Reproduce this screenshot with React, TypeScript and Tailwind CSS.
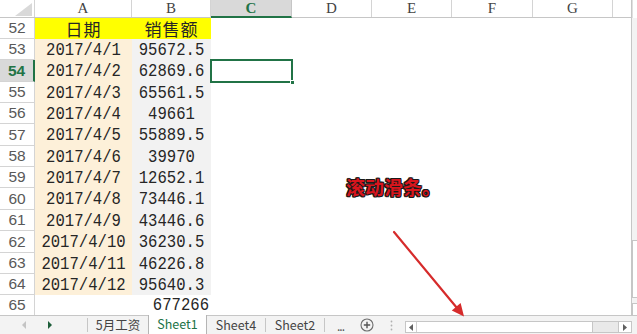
import React from "react";

type Row = { n: number; h: string; a: string; b: string; head?: boolean; sel?: boolean };

const rows: Row[] = [
  { n: 52, h: "h-[21px]", a: "日期", b: "销售额", head: true },
  { n: 53, h: "h-[21px]", a: "2017/4/1", b: "95672.5" },
  { n: 54, h: "h-[22px]", a: "2017/4/2", b: "62869.6", sel: true },
  { n: 55, h: "h-[21px]", a: "2017/4/3", b: "65561.5" },
  { n: 56, h: "h-[21px]", a: "2017/4/4", b: "49661" },
  { n: 57, h: "h-[22px]", a: "2017/4/5", b: "55889.5" },
  { n: 58, h: "h-[21px]", a: "2017/4/6", b: "39970" },
  { n: 59, h: "h-[21px]", a: "2017/4/7", b: "12652.1" },
  { n: 60, h: "h-[22px]", a: "2017/4/8", b: "73446.1" },
  { n: 61, h: "h-[21px]", a: "2017/4/9", b: "43446.6" },
  { n: 62, h: "h-[22px]", a: "2017/4/10", b: "36230.5" },
  { n: 63, h: "h-[21px]", a: "2017/4/11", b: "46226.8" },
  { n: 64, h: "h-[21px]", a: "2017/4/12", b: "95640.3" },
];

const cols = [
  { l: "A", w: "w-[97px]" },
  { l: "B", w: "w-[79px]" },
  { l: "C", w: "w-[81px]", active: true },
  { l: "D", w: "w-[80px]" },
  { l: "E", w: "w-[80px]" },
  { l: "F", w: "w-[81px]" },
  { l: "G", w: "w-[80px]" },
];

const mono = "font-['Liberation_Mono',monospace] text-[15.6px] text-[#262626]";
const rowHeadBase =
  "w-[35px] shrink-0 flex items-center justify-center border-r border-b border-[#d4d4d4] font-['Liberation_Sans',sans-serif] text-[15.5px]";

function Num({ children }: { children: React.ReactNode }) {
  return <span className="inline-block scale-y-[1.2] translate-y-[1px]">{children}</span>;
}

export default function App() {
  return (
    <div className="relative w-[637px] h-[334px] overflow-hidden bg-white select-none">
      <div className="flex h-[315px]">
        {/* grid */}
        <div className="w-[632px] h-[315px] border-r border-[#c6c6c6] flex flex-col">
          {/* column header */}
          <div className="flex h-[18px] border-b border-[#c6c6c6] font-['Liberation_Serif',serif] text-[15px] text-[#444]">
            <div className="w-[35px] shrink-0 border-r border-[#d4d4d4] flex items-end justify-end pr-[2px] pb-[1px]">
              <svg width="17" height="13" viewBox="0 0 17 13">
                <polygon points="17,0 17,13 0,13" fill="#d9d9d9" />
              </svg>
            </div>
            {cols.map((c) =>
              c.active ? (
                <div
                  key={c.l}
                  className={`${c.w} shrink-0 flex items-center justify-center bg-[#d9d9d9] text-[#217346] font-bold border-b-2 border-[#217346] border-r border-r-[#c6c6c6] -mb-px`}
                >
                  {c.l}
                </div>
              ) : (
                <div key={c.l} className={`${c.w} shrink-0 flex items-center justify-center border-r border-[#d4d4d4]`}>
                  {c.l}
                </div>
              )
            )}
            <div className="flex-1" />
          </div>

          {/* data rows */}
          {rows.map((r) => (
            <div key={r.n} className={`flex ${r.h}`}>
              {r.sel ? (
                <div className={`${rowHeadBase} bg-[#d9d9d9] text-[#217346] font-bold border-r-2 border-r-[#217346]`}>
                  {r.n}
                </div>
              ) : (
                <div className={`${rowHeadBase} text-[#595959]`}>{r.n}</div>
              )}
              {r.head ? (
                <>
                  <div className="w-[97px] shrink-0 bg-[#ffff00] flex items-center justify-center font-['Noto_Sans_CJK_SC',sans-serif] text-[17px] tracking-[1px] text-[#262626]">
                    {r.a}
                  </div>
                  <div className="w-[79px] shrink-0 bg-[#ffff00] flex items-center justify-center font-['Noto_Sans_CJK_SC',sans-serif] text-[17px] tracking-[1px] text-[#262626]">
                    {r.b}
                  </div>
                </>
              ) : (
                <>
                  <div className={`w-[97px] shrink-0 bg-[#fdf0d9] flex items-center justify-center ${mono}`}>
                    <Num>{r.a}</Num>
                  </div>
                  <div className={`w-[79px] shrink-0 bg-[#f2f2f2] flex items-center justify-center ${mono}`}>
                    <Num>{r.b}</Num>
                  </div>
                </>
              )}
              <div className="relative w-[81px] shrink-0">
                {r.sel && (
                  <div className="absolute -left-px -top-px -right-px -bottom-px border-2 border-[#217346]">
                    <div className="absolute -right-[4px] -bottom-[4px] w-[5px] h-[5px] bg-[#217346] border border-white" />
                  </div>
                )}
              </div>
              <div className="flex-1" />
            </div>
          ))}

          {/* row 65 */}
          <div className="flex h-[20px]">
            <div className={`${rowHeadBase} border-b-0 text-[#595959]`}>65</div>
            <div className="w-[97px] shrink-0" />
            <div className={`w-[79px] shrink-0 flex items-center justify-end pr-[2px] ${mono}`}>
              <Num>677266</Num>
            </div>
            <div className="flex-1" />
          </div>
        </div>

        {/* vertical scrollbar sliver */}
        <div className="w-[5px] h-[315px] flex flex-col bg-[#f3f3f3]">
          <div className="h-[18px] bg-white border-l border-[#e0e0e0]" />
          <div className="h-[222px]" />
          <div className="h-[58px] bg-white border-l border-t border-b border-[#c6c6c6]" />
          <div className="h-[5px]" />
          <div className="h-[12px] bg-white border-l border-t border-[#c6c6c6]" />
        </div>
      </div>

      {/* sheet tab bar */}
      <div className="flex h-[19px] items-stretch bg-[#f3f3f3] border-t border-[#c6c6c6] font-['Noto_Sans_CJK_SC',sans-serif] text-[12.5px] text-[#444]">
        <div className="w-[87px] shrink-0 relative">
          <svg className="absolute left-[22px] top-[5px]" width="5" height="8" viewBox="0 0 5 8">
            <polygon points="4,0 4,8 0,4" fill="#c4c4c4" />
          </svg>
          <svg className="absolute left-[48px] top-[5px]" width="5" height="8" viewBox="0 0 5 8">
            <polygon points="0,0 0,8 4,4" fill="#1e5e3a" />
          </svg>
        </div>
        <div className="w-[61px] shrink-0 flex items-center justify-center border-l border-[#c6c6c6] my-[2px] leading-none">
          5月工资
        </div>
        <div className="w-[59px] shrink-0 flex items-center justify-center bg-white text-[#217346] border-l border-r border-[#b5b5b5] -mt-px leading-none">
          Sheet1
        </div>
        <div className="w-[58px] shrink-0 flex items-center justify-center my-[2px] leading-none">Sheet4</div>
        <div className="w-[60px] shrink-0 flex items-center justify-center border-l border-r border-[#c6c6c6] my-[2px] leading-none">
          Sheet2
        </div>
        <div className="w-[80px] shrink-0 relative">
          <span className="absolute left-[12px] top-[1px] text-[12px] tracking-[-1px] text-[#555]">...</span>
          <svg className="absolute left-[35px] top-[2px]" width="14" height="14" viewBox="0 0 14 14">
            <circle cx="7" cy="7" r="6" fill="none" stroke="#6d6d6d" strokeWidth="1.1" />
            <path d="M7 3.8v6.4M3.8 7h6.4" stroke="#555" strokeWidth="1.4" />
          </svg>
          <svg className="absolute left-[65px] top-[4px]" width="3" height="11" viewBox="0 0 3 11">
            <circle cx="1.5" cy="1.5" r="0.9" fill="#b0b0b0" />
            <circle cx="1.5" cy="5.5" r="0.9" fill="#b0b0b0" />
            <circle cx="1.5" cy="9.5" r="0.9" fill="#b0b0b0" />
          </svg>
        </div>
        {/* horizontal scrollbar */}
        <div className="w-[227px] shrink-0 flex h-[12px] mt-[5px] border border-[#c6c6c6] bg-[#e9e9e9]">
          <div className="w-[11px] shrink-0 bg-white flex items-center justify-center border-r border-[#d0d0d0]">
            <svg width="4" height="7" viewBox="0 0 4 7">
              <polygon points="4,0 4,7 0,3.5" fill="#606060" />
            </svg>
          </div>
          <div className="w-[176px] shrink-0 bg-white border-r border-[#c6c6c6]" />
          <div className="flex-1" />
          <div className="w-[13px] shrink-0 bg-white flex items-center justify-center border-l border-[#c6c6c6]">
            <svg width="4" height="7" viewBox="0 0 4 7">
              <polygon points="0,0 0,7 4,3.5" fill="#606060" />
            </svg>
          </div>
        </div>
      </div>

      {/* annotation text */}
      <div className="absolute left-[346px] top-[176px] font-['Noto_Sans_CJK_SC',sans-serif] font-bold text-[19px] leading-[22px] text-[#d9151d] [text-shadow:1px_1px_0_#1a1a1a,-1px_-1px_0_#1a1a1a,1px_-1px_0_#1a1a1a,-1px_1px_0_#1a1a1a,0_1px_0_#1a1a1a,0_-1px_0_#1a1a1a,1px_0_0_#1a1a1a,-1px_0_0_#1a1a1a]">
        滚动滑条。
      </div>

      {/* annotation arrow */}
      <svg className="absolute left-0 top-0 pointer-events-none" width="637" height="334" viewBox="0 0 637 334">
        <line x1="394" y1="232" x2="457" y2="308" stroke="#d62b2b" strokeWidth="2.2" strokeLinecap="round" />
        <polygon points="464,316.5 451.8,310.5 460.6,303" fill="#d62b2b" />
      </svg>
    </div>
  );
}
